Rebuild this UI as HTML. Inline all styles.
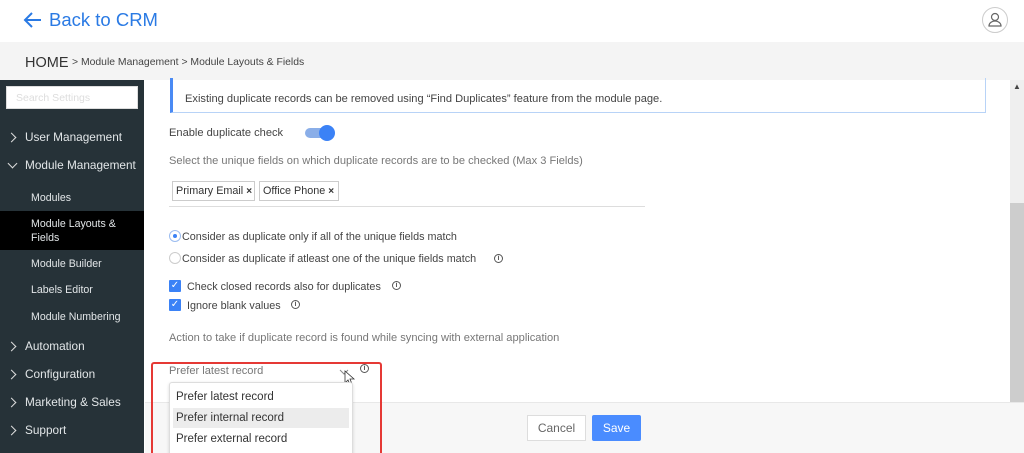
<!DOCTYPE html>
<html style="overflow:hidden;height:453px"><head><style>
*{margin:0;padding:0;box-sizing:border-box}
body{width:1024px;height:453px;overflow:hidden;position:relative;background:#fff;font-family:"Liberation Sans",sans-serif;}
.a{position:absolute;white-space:nowrap}
.sb{color:#e2e6e8;font-size:11.8px}
.ss{color:#e2e6e8;font-size:10.6px}
.c{color:#444;font-size:11.1px}
.chev{position:absolute;width:7px;height:7px;border-right:1.5px solid #ddd;border-bottom:1.5px solid #ddd}
.info{position:absolute;width:9px;height:9px;border:1px solid #555;border-radius:50%;font-size:7px;line-height:7px;text-align:center;color:#555;font-weight:bold}
.cb{position:absolute;width:12px;height:12px;background:#3b82f6;border-radius:1px;color:#fff;font-size:10px;line-height:12px;text-align:center}
</style></head><body>
<svg class="a" style="left:23px;top:11px" width="20" height="18" viewBox="0 0 20 18"><path d="M18 9H3M9 2L2 9l7 7" fill="none" stroke="#2a7ae4" stroke-width="2"/></svg>
<div class="a" style="left:49px;top:9px;font-size:18.5px;color:#2a7ae4">Back to CRM</div>
<div class="a" style="left:982px;top:7px;width:26px;height:26px;border:1px solid #ccc;border-radius:50%"></div>
<svg class="a" style="left:986px;top:11px" width="18" height="18" viewBox="0 0 18 18"><circle cx="9" cy="6" r="3.5" fill="none" stroke="#666" stroke-width="1.2"/><path d="M3 15c0-3 3-5 6-5s6 2 6 5z" fill="none" stroke="#666" stroke-width="1.2"/></svg>
<div class="a" style="left:0;top:42px;width:1024px;height:38px;background:#f4f4f4"></div>
<div class="a" style="left:25px;top:55px;font-size:14.5px;color:#333">HOME</div>
<div class="a" style="left:72px;top:57px;font-size:10.4px;color:#444">&gt; Module Management &gt; Module Layouts &amp; Fields</div>
<div class="a" style="left:0;top:80px;width:144px;height:373px;background:#263238"></div>
<div class="a" style="left:6px;top:86px;width:132px;height:23px;background:#fff;border:1px solid #ddd;font-size:10.5px;color:#ddd;padding:5px 9px">Search Settings</div>
<div class="chev" style="left:8px;top:134px;transform:rotate(-45deg)"></div>
<div class="a sb" style="left:25px;top:130px">User Management</div>
<div class="chev" style="left:9px;top:160px;transform:rotate(45deg)"></div>
<div class="a sb" style="left:25px;top:158px">Module Management</div>
<div class="a ss" style="left:31px;top:192px">Modules</div>
<div class="a" style="left:0;top:211px;width:144px;height:39px;background:#000"></div>
<div class="a ss" style="left:31px;top:217px;line-height:14px">Module Layouts &amp;<br>Fields</div>
<div class="a ss" style="left:31px;top:258px">Module Builder</div>
<div class="a ss" style="left:31px;top:284px">Labels Editor</div>
<div class="a ss" style="left:31px;top:311px">Module Numbering</div>
<div class="chev" style="left:8px;top:343px;transform:rotate(-45deg)"></div>
<div class="a sb" style="left:25px;top:339px">Automation</div>
<div class="chev" style="left:8px;top:371px;transform:rotate(-45deg)"></div>
<div class="a sb" style="left:25px;top:367px">Configuration</div>
<div class="chev" style="left:8px;top:399px;transform:rotate(-45deg)"></div>
<div class="a sb" style="left:25px;top:395px">Marketing &amp; Sales</div>
<div class="chev" style="left:8px;top:427px;transform:rotate(-45deg)"></div>
<div class="a sb" style="left:25px;top:423px">Support</div>
<div class="a" style="left:1010px;top:80px;width:14px;height:322px;background:#efefef"></div>
<div class="a" style="left:1010px;top:203px;width:14px;height:199px;background:#cdcdcd"></div>
<div class="a" style="left:1013px;top:82px;font-size:8px;color:#444">&#9650;</div>
<div class="a" style="left:170px;top:78px;width:816px;height:35px;border:1px solid #b8d3f7;border-left:3px solid #4a8af4;border-top:none"></div>
<div class="a c" style="left:185px;top:93px">Existing duplicate records can be removed using “Find Duplicates” feature from the module page.</div>
<div class="a c" style="left:169px;top:127px">Enable duplicate check</div>
<div class="a" style="left:305px;top:128px;width:26px;height:10px;border-radius:5px;background:#8aaee8"></div>
<div class="a" style="left:319px;top:125px;width:16px;height:16px;border-radius:50%;background:#3b82f6"></div>
<div class="a c" style="left:169px;top:155px;color:#777">Select the unique fields on which duplicate records are to be checked (Max 3 Fields)</div>
<div class="a" style="left:172px;top:181px;width:83px;height:20px;border:1px solid #ccc;font-size:10.8px;color:#333;padding:3px 3px">Primary Email <b style="font-size:10px">×</b></div>
<div class="a" style="left:259px;top:181px;width:80px;height:20px;border:1px solid #ccc;font-size:10.8px;color:#333;padding:3px 3px">Office Phone <b style="font-size:10px">×</b></div>
<div class="a" style="left:169px;top:206px;width:476px;height:1px;background:#ddd"></div>
<div class="a" style="left:169px;top:230px;width:12px;height:12px;border:1px solid #9bbcf0;border-radius:50%"></div>
<div class="a" style="left:173px;top:234px;width:4px;height:4px;border-radius:50%;background:#3b82f6"></div>
<div class="a c" style="left:182px;top:231px;font-size:10.8px">Consider as duplicate only if all of the unique fields match</div>
<div class="a" style="left:169px;top:252px;width:12px;height:12px;border:1px solid #ccc;border-radius:50%"></div>
<div class="a c" style="left:182px;top:253px;font-size:10.8px">Consider as duplicate if atleast one of the unique fields match</div>
<div class="info" style="left:494px;top:254px">i</div>
<div class="cb" style="left:169px;top:280px">✓</div>
<div class="a c" style="left:187px;top:281px;font-size:10.8px">Check closed records also for duplicates</div>
<div class="info" style="left:392px;top:281px">i</div>
<div class="cb" style="left:169px;top:299px">✓</div>
<div class="a c" style="left:187px;top:300px;font-size:10.8px">Ignore blank values</div>
<div class="info" style="left:291px;top:300px">i</div>
<div class="a c" style="left:169px;top:332px;color:#777">Action to take if duplicate record is found while syncing with external application</div>
<div class="a" style="left:145px;top:402px;width:879px;height:51px;background:#f7f7f7;border-top:1px solid #e8e8e8"></div>
<div class="a" style="left:527px;top:415px;width:59px;height:26px;background:#fff;border:1px solid #ddd;font-size:12px;color:#666;text-align:center;line-height:24px">Cancel</div>
<div class="a" style="left:592px;top:415px;width:49px;height:26px;background:#4a8cff;font-size:12px;color:#fff;text-align:center;line-height:26px;border-radius:2px">Save</div>
<div class="a c" style="left:169px;top:365px;color:#777">Prefer latest record</div>
<svg class="a" style="left:339px;top:369px" width="10" height="6"><path d="M1 1l4 4 4-4" fill="none" stroke="#888" stroke-width="1"/></svg>
<svg class="a" style="left:344px;top:370px" width="12" height="17"><path d="M1 1v12l3-3 2 5 2-1-2-5h4z" fill="#fff" stroke="#333" stroke-width="0.8"/></svg>
<div class="info" style="left:360px;top:364px">i</div>
<div class="a" style="left:169px;top:382px;width:184px;height:75px;background:#fff;border:1px solid #ddd;border-radius:3px;box-shadow:0 1px 3px rgba(0,0,0,.15)"></div>
<div class="a" style="left:173px;top:408px;width:176px;height:20px;background:#ececec"></div>
<div class="a c" style="left:176px;top:391px;color:#333;font-size:11.5px">Prefer latest record</div>
<div class="a c" style="left:176px;top:412px;color:#333;font-size:11.5px">Prefer internal record</div>
<div class="a c" style="left:176px;top:433px;color:#333;font-size:11.5px">Prefer external record</div>
<div class="a" style="left:151px;top:362px;width:231px;height:100px;border:2px solid #e53935;border-radius:3px"></div>
</body></html>
